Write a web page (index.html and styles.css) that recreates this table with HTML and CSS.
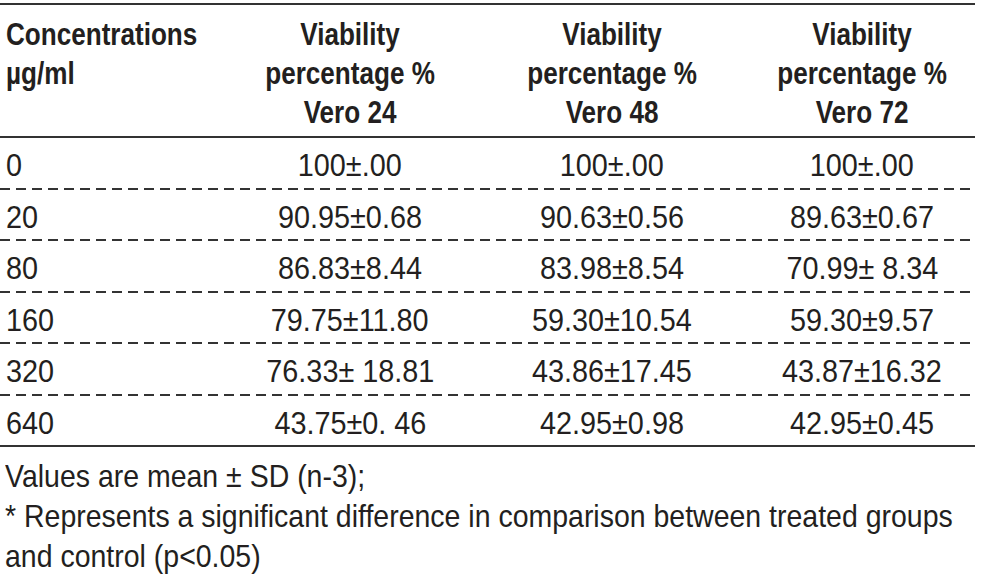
FILE: index.html
```html
<!DOCTYPE html>
<html lang="en">
<head>
<meta charset="utf-8">
<title>Viability table</title>
<link rel="stylesheet" href="styles.css">
</head>
<body>
<div class="table">
  <div class="row head">
    <div class="cell first"><span class="t">Concentrations<br>µg/ml</span></div>
    <div class="cell"><span class="t">Viability<br>percentage %<br>Vero 24</span></div>
    <div class="cell"><span class="t">Viability<br>percentage %<br>Vero 48</span></div>
    <div class="cell"><span class="t">Viability<br>percentage %<br>Vero 72</span></div>
  </div>
  <div class="row">
    <div class="cell first"><span class="t">0</span></div>
    <div class="cell"><span class="t">100±.00</span></div>
    <div class="cell"><span class="t">100±.00</span></div>
    <div class="cell"><span class="t">100±.00</span></div>
  </div>
  <div class="row">
    <div class="cell first"><span class="t">20</span></div>
    <div class="cell"><span class="t">90.95±0.68</span></div>
    <div class="cell"><span class="t">90.63±0.56</span></div>
    <div class="cell"><span class="t">89.63±0.67</span></div>
  </div>
  <div class="row">
    <div class="cell first"><span class="t">80</span></div>
    <div class="cell"><span class="t">86.83±8.44</span></div>
    <div class="cell"><span class="t">83.98±8.54</span></div>
    <div class="cell"><span class="t">70.99± 8.34</span></div>
  </div>
  <div class="row">
    <div class="cell first"><span class="t">160</span></div>
    <div class="cell"><span class="t">79.75±11.80</span></div>
    <div class="cell"><span class="t">59.30±10.54</span></div>
    <div class="cell"><span class="t">59.30±9.57</span></div>
  </div>
  <div class="row">
    <div class="cell first"><span class="t">320</span></div>
    <div class="cell"><span class="t">76.33± 18.81</span></div>
    <div class="cell"><span class="t">43.86±17.45</span></div>
    <div class="cell"><span class="t">43.87±16.32</span></div>
  </div>
  <div class="row last">
    <div class="cell first"><span class="t">640</span></div>
    <div class="cell"><span class="t">43.75±0. 46</span></div>
    <div class="cell"><span class="t">42.95±0.98</span></div>
    <div class="cell"><span class="t">42.95±0.45</span></div>
  </div>
  <div class="notes">
    <p>Values are mean ± SD (n-3);</p>
    <p>* Represents a significant difference in comparison between treated groups and control (p&lt;0.05)</p>
  </div>
</div>
</body>
</html>
```

FILE: styles.css
```css
html, body {
  margin: 0;
  padding: 0;
  background: #ffffff;
}

body {
  font-family: "Liberation Sans", Arial, sans-serif;
  color: #231f20;
  font-size: 32px;
  overflow: hidden;
}

.table {
  width: 975px;
  margin-top: 3px;
  border-top: 2px solid #333;
}

.row {
  display: grid;
  grid-template-columns: 225px 250px 274px 226px;
  padding-top: 5px;
  padding-bottom: 2px;
  line-height: 44.5px;
  background-image: repeating-linear-gradient(to right, #333 0 10px, transparent 10px 16px);
  background-size: 100% 2px;
  background-repeat: no-repeat;
  background-position: left bottom;
}

.row.head {
  font-weight: bold;
  font-size: 32px;
  line-height: 39px;
  padding-top: 10px;
  padding-bottom: 4px;
  background: none;
  border-bottom: 2px solid #333;
}

.row.last {
  background: none;
  border-bottom: 2px solid #333;
  padding-bottom: 0;
}

.cell {
  text-align: center;
  white-space: nowrap;
}

.cell.first {
  text-align: left;
  padding-left: 6px;
}

.t {
  display: inline-block;
  transform: scaleX(0.9);
  transform-origin: center;
}

.head .t {
  transform: scaleX(0.815);
}

.first .t {
  transform-origin: left center;
}

.notes {
  padding-top: 9px;
  padding-left: 5px;
  line-height: 40px;
  overflow: hidden;
}

.notes p {
  margin: 0;
  width: 1090px;
  transform: scaleX(0.89);
  transform-origin: left center;
}
```
